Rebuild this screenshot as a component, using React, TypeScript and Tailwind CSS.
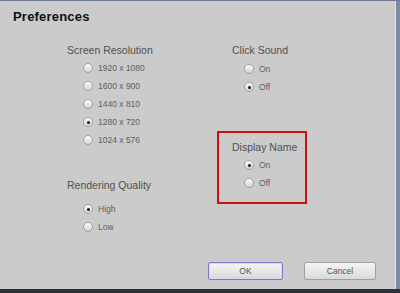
import React from 'react';

const font = { fontFamily: '"Liberation Sans", Arial, sans-serif' };

function Radio({ label, checked }: { label: string; checked?: boolean }) {
  return (
    <div className="flex items-center h-[18px] gap-[5px]">
      <span className="w-[10px] h-[10px] rounded-full border border-[#a0a0a0] bg-gradient-to-b from-[#fafafa] to-[#d4d4d4] flex items-center justify-center shadow-[inset_0_1px_1px_rgba(255,255,255,0.8)]">
        {checked && <span className="w-[3px] h-[3px] rounded-full bg-[#111]" />}
      </span>
      <span className="text-[8.5px] leading-none text-[#606060] whitespace-nowrap">{label}</span>
    </div>
  );
}

function Heading({ children }: { children: React.ReactNode }) {
  return <div className="h-[14px] leading-[14px] text-[10.5px] text-[#505050] whitespace-nowrap">{children}</div>;
}

function Button({ children, focused }: { children: React.ReactNode; focused?: boolean }) {
  return (
    <button
      className={`h-[18px] rounded-[2px] border bg-gradient-to-b from-[#f6f6f6] to-[#d9d9d9] text-[8.5px] text-[#555] ${
        focused ? 'w-[75px] border-[#7c78cc] shadow-[inset_0_0_0_1px_#d8d8f4]' : 'w-[72px] border-[#a0a0a0]'
      }`}
    >
      {children}
    </button>
  );
}

export default function App() {
  return (
    <div className="w-[400px] h-[293px] flex flex-col bg-[#2e3440]" style={font}>
      <div className="h-px bg-[#6f7c96]" />
      <div className="flex flex-1">
        <div className="flex-1 flex flex-col bg-[#cbcbcb] border-r border-[#e2e2e2]">
          <div className="pl-[13px] pt-[8px] h-[23px] leading-[15px] text-[13px] font-bold tracking-[0.2px] text-[#111]">
            Preferences
          </div>

          <div className="flex mt-[19px]">
            <div className="w-[217px] shrink-0 pl-[67px] flex flex-col">
              <Heading>Screen Resolution</Heading>
              <div className="pl-[16px] mt-[2px]">
                <Radio label="1920 x 1080" />
                <Radio label="1600 x 900" />
                <Radio label="1440 x 810" />
                <Radio label="1280 x 720" checked />
                <Radio label="1024 x 576" />
              </div>
              <div className="mt-[29px]">
                <Heading>Rendering Quality</Heading>
              </div>
              <div className="pl-[16px] mt-[8px]">
                <Radio label="High" checked />
                <Radio label="Low" />
              </div>
            </div>

            <div className="flex flex-col">
              <div className="pl-[15px]">
                <Heading>Click Sound</Heading>
                <div className="pl-[12px] mt-[3px]">
                  <Radio label="On" />
                  <Radio label="Off" checked />
                </div>
              </div>
              <div className="mt-[35px] w-[90px] border-2 border-[#cc1111] pl-[13px] pt-[7px] pb-[10px]">
                <Heading>Display Name</Heading>
                <div className="pl-[12px] mt-[2px]">
                  <Radio label="On" checked />
                  <Radio label="Off" />
                </div>
              </div>
            </div>
          </div>

          <div className="mt-auto flex justify-end gap-[21px] pr-[19px] pb-[9px]">
            <Button focused>OK</Button>
            <Button>Cancel</Button>
          </div>
        </div>
        <div className="w-[4px] bg-[#7d8ba6]" />
      </div>
      <div className="h-[4px] bg-[#2b2f36]" />
    </div>
  );
}
